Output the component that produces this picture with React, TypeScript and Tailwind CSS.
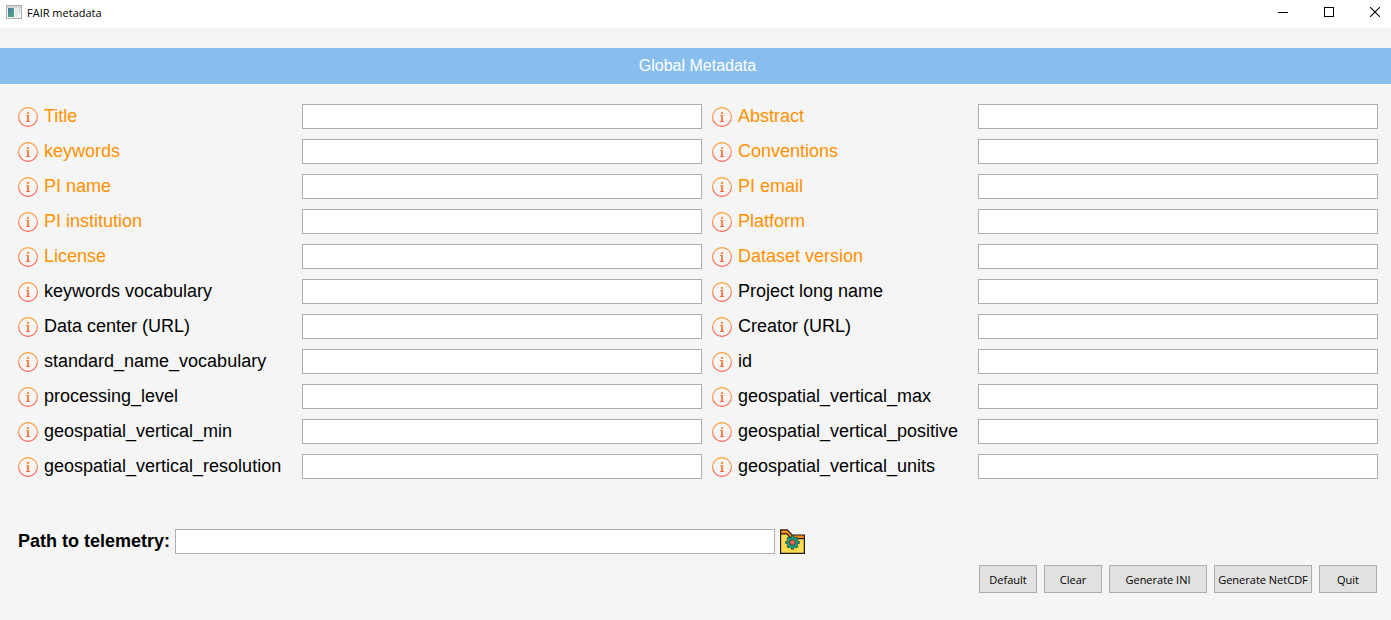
import React from "react";

type Field = { label: string; required?: boolean };

const fields: Field[] = [
  { label: "Title", required: true },
  { label: "Abstract", required: true },
  { label: "keywords", required: true },
  { label: "Conventions", required: true },
  { label: "PI name", required: true },
  { label: "PI email", required: true },
  { label: "PI institution", required: true },
  { label: "Platform", required: true },
  { label: "License", required: true },
  { label: "Dataset version", required: true },
  { label: "keywords vocabulary" },
  { label: "Project long name" },
  { label: "Data center (URL)" },
  { label: "Creator (URL)" },
  { label: "standard_name_vocabulary" },
  { label: "id" },
  { label: "processing_level" },
  { label: "geospatial_vertical_max" },
  { label: "geospatial_vertical_min" },
  { label: "geospatial_vertical_positive" },
  { label: "geospatial_vertical_resolution" },
  { label: "geospatial_vertical_units" },
];

const inputClass =
  "h-[25px] min-w-0 border border-[#abadb3] bg-white px-1 text-base outline-none focus:border-[#0078d7]";

function AppIcon() {
  return (
    <svg width="16" height="14" viewBox="0 0 16 14" aria-hidden="true">
      <defs>
        <linearGradient id="app-pane" x1="0" y1="0" x2="1" y2="1">
          <stop offset="0" stopColor="#4a78b0" />
          <stop offset="1" stopColor="#4fae74" />
        </linearGradient>
      </defs>
      <rect x="0.5" y="0.5" width="15" height="13" fill="#f4f5f5" stroke="#a9aeb2" />
      <rect x="1" y="1" width="14" height="2" fill="#d3d6d8" />
      <rect x="2" y="3" width="6" height="9" fill="url(#app-pane)" />
      <rect x="9" y="3" width="3" height="9" fill="#e6e8ea" />
      <rect x="13" y="3" width="1" height="5" fill="#b5c9cf" />
    </svg>
  );
}

function InfoIcon() {
  return (
    <svg width="20" height="20" viewBox="0 0 20 20" className="shrink-0" aria-hidden="true">
      <defs>
        <linearGradient id="info-warm" gradientUnits="userSpaceOnUse" x1="0" y1="0" x2="0" y2="20">
          <stop offset="0" stopColor="#ffa63d" />
          <stop offset="1" stopColor="#fb5a4c" />
        </linearGradient>
      </defs>
      <circle cx="10" cy="10" r="9.4" fill="none" stroke="url(#info-warm)" strokeWidth="1.1" />
      <circle cx="10" cy="5.9" r="1.2" fill="url(#info-warm)" />
      <path d="M8 8.1H11V14H12.1V15H8V14H9.1V9H8Z" fill="url(#info-warm)" />
    </svg>
  );
}

function FolderGearIcon() {
  return (
    <svg width="25" height="25" viewBox="0 0 25 25" aria-hidden="true">
      <path d="M0.6 0.8H7.2L12 6H24.4V11H0.6Z" fill="#ff8c14" stroke="#1c1a1a" strokeWidth="1.2" />
      <path d="M0.6 4.8H7L11.2 9.6H24.4V24.3H0.6Z" fill="#ffdb4d" stroke="#1c1a1a" strokeWidth="1.2" />
      <g transform="translate(12.5 13.4)">
        <g fill="#12a58c" stroke="#17302f" strokeWidth="0.7">
          <path d="M-1.8 -4L-1 -6.8H1L1.8 -4V4L1 6.8H-1L-1.8 4Z" />
          <path d="M-1.8 -4L-1 -6.8H1L1.8 -4V4L1 6.8H-1L-1.8 4Z" transform="rotate(45)" />
          <path d="M-1.8 -4L-1 -6.8H1L1.8 -4V4L1 6.8H-1L-1.8 4Z" transform="rotate(90)" />
          <path d="M-1.8 -4L-1 -6.8H1L1.8 -4V4L1 6.8H-1L-1.8 4Z" transform="rotate(135)" />
        </g>
        <circle r="4.7" fill="#12a58c" />
        <circle r="2.8" fill="#ff5f4d" stroke="#17302f" strokeWidth="0.8" />
      </g>
    </svg>
  );
}

function TitleBar() {
  const control = "flex h-7 w-[46px] items-center justify-center hover:bg-black/10";
  return (
    <header className="flex h-7 items-center justify-between overflow-hidden bg-white">
      <div className="flex items-center gap-[5px] pb-1 pl-1.5">
        <AppIcon />
        <h1 className="pt-0.5 font-['Open_Sans',sans-serif] text-[11px] leading-4">FAIR metadata</h1>
      </div>
      <div className="-mr-[7px] flex pb-1">
        <button type="button" aria-label="Minimize" className={control}>
          <svg width="10" height="10" viewBox="0 0 10 10" shapeRendering="crispEdges">
            <path d="M0 5.5H10" stroke="#000" />
          </svg>
        </button>
        <button type="button" aria-label="Maximize" className={control}>
          <svg width="10" height="10" viewBox="0 0 10 10">
            <rect x="0.5" y="0.5" width="9" height="9" fill="none" stroke="#000" />
          </svg>
        </button>
        <button type="button" aria-label="Close" className={control}>
          <svg width="10" height="10" viewBox="0 0 10 10">
            <path d="M0 0L10 10M10 0L0 10" stroke="#000" strokeWidth="1.1" />
          </svg>
        </button>
      </div>
    </header>
  );
}

function ActionButton({ wide, children }: { wide?: boolean; children: React.ReactNode }) {
  return (
    <button
      type="button"
      className={`h-7 whitespace-nowrap border border-[#adadad] bg-[#e1e1e1] pt-0.5 font-['Open_Sans',sans-serif] text-[11px] leading-4 hover:border-[#0078d7] hover:bg-[#e5f1fb] ${
        wide ? "w-[98px]" : "w-[58px]"
      }`}
    >
      {children}
    </button>
  );
}

export default function App() {
  return (
    <div className="min-h-screen bg-[#f5f5f5] font-['Liberation_Sans',Arial,sans-serif] text-black">
      <TitleBar />
      <main className="pt-5">
        <h2 className="bg-[#88beee] pl-1 text-center text-base leading-9 text-white">Global Metadata</h2>
        <form>
          <div className="grid grid-cols-[284px_1fr_276px_1fr] gap-y-2.5 pt-5 pr-[13px] pl-[18px]">
            {fields.map((field, index) => (
              <React.Fragment key={field.label}>
                <label
                  htmlFor={`field-${index}`}
                  className={`flex items-center gap-1.5 text-[18px] leading-5 ${
                    index % 2 ? "pl-2.5" : ""
                  } ${field.required ? "text-[#ff9100]" : ""}`}
                >
                  <InfoIcon />
                  <span className="pb-0.5">{field.label}</span>
                </label>
                <input id={`field-${index}`} type="text" className={inputClass} />
              </React.Fragment>
            ))}
          </div>
          <div className="mt-[50px] flex items-center gap-[5px] pl-[18px]">
            <label htmlFor="telemetry" className="pb-0.5 text-[18px] leading-5 font-bold">
              Path to telemetry:
            </label>
            <input id="telemetry" type="text" className={`w-[600px] ${inputClass}`} />
            <button type="button" aria-label="Browse">
              <FolderGearIcon />
            </button>
          </div>
          <div className="mt-[11px] flex justify-end gap-[7px] pr-3.5 pb-6">
            <ActionButton>Default</ActionButton>
            <ActionButton>Clear</ActionButton>
            <ActionButton wide>Generate INI</ActionButton>
            <ActionButton wide>Generate NetCDF</ActionButton>
            <ActionButton>Quit</ActionButton>
          </div>
        </form>
      </main>
    </div>
  );
}
